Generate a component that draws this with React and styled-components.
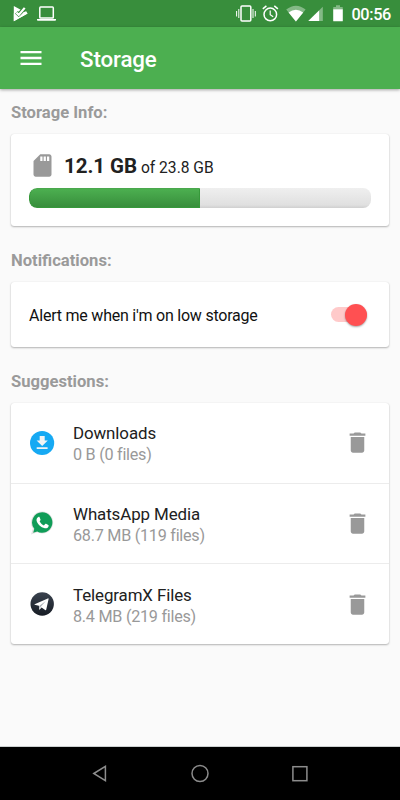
import React, { useState } from 'react'
import styled, { createGlobalStyle } from 'styled-components'

const GlobalStyle = createGlobalStyle`
*, *::before, *::after { box-sizing: border-box; }
body {
  margin: 0;
  background: #fafafa;
  font-family: Roboto, 'Noto Sans', sans-serif;
}
h1, h2, p { margin: 0; }
svg { display: block; flex-shrink: 0; }
`
const Screen = styled.div`
width: 400px;
height: 800px;
display: flex;
flex-direction: column;
background: #fafafa;
overflow: hidden;
`
const StatusBar = styled.div`
height: 27px;
flex-shrink: 0;
display: flex;
align-items: center;
justify-content: space-between;
padding: 0 9px 0 13px;
background: #388e3c;
color: #fff;
`
const StatusGroup = styled.div`
display: flex;
align-items: center;
gap: ${props => props.$gap}px;
`
const Clock = styled.span`
  font-size: 16.3px;
  font-weight: 500;
  letter-spacing: -0.35px;
  line-height: 27px;
  padding-top: 1px;
`
const Header = styled.header`
height: 62px;
flex-shrink: 0;
display: flex;
align-items: center;
gap: 35px;
padding: 0 17px 1px;
background: #4caf50;
color: #fff;
box-shadow: 0 1px 3px rgba(0, 0, 0, 0.35);
`
const IconButton = styled.button`
  display: flex;
  padding: 0;
  border: 0;
  background: none;
  color: inherit;
`
const Title = styled.h1`
  font-size: 22.3px;
  font-weight: 500;
  letter-spacing: -0.1px;
  line-height: 28px;
  padding-top: 3px;
`
const Content = styled.main`
flex: 1;
padding: 12px 11px 0;
border-bottom: 1px solid #ccd0d0;
`
const SectionLabel = styled.h2`
  height: 24px;
  margin-bottom: 9px;
  font-size: 16.6px;
  font-weight: 700;
  line-height: 24px;
  color: #9a9a9a;
`
const Card = styled.section`
height: ${props => props.$height}px;
margin-bottom: ${props => props.$space || 0}px;
background: #fff;
border-radius: 3px;
box-shadow: 0 1px 2px rgba(0, 0, 0, 0.28), 0 0 1px rgba(0, 0, 0, 0.12);
`
const StorageCard = styled(Card)`
padding: 18px 18px 0;
`
const Usage = styled.div`
display: flex;
align-items: center;
height: 27px;
color: #999;
`
const UsageText = styled.p`
  margin-left: 8px;
  padding-top: 2px;
  font-size: 15.6px;
  line-height: 28px;
  color: #212121;
  white-space: nowrap;
`
const Used = styled.strong`
  font-size: 20.5px;
  font-weight: 700;
  letter-spacing: -0.05px;
`
const Track = styled.div`
height: 20px;
margin-top: 9px;
border-radius: 8px;
overflow: hidden;
background: linear-gradient(#efefef, #e0e0e0 85%, #cfcfcf);
`
const Fill = styled.div`
height: 100%;
background: linear-gradient(#4caf50, #388e3c);
border: 1px solid #36993a;
border-top-color: #4aa84d;
border-radius: 8px 0 0 8px;
`
const AlertCard = styled(Card)`
display: flex;
align-items: center;
justify-content: space-between;
padding: 0 22px 0 18px;
`
const AlertText = styled.p`
  font-size: 16px;
  letter-spacing: -0.22px;
  line-height: 24px;
  padding-top: 2px;
  color: #111;
`
const Switch = styled.button`
display: flex;
align-items: center;
justify-content: ${props => props.$on ? 'flex-end' : 'flex-start'};
width: 36px;
height: 15px;
padding: 0;
border: 0;
border-radius: 8px;
background: ${props => props.$on ? '#ffcaca' : '#bbb'};
`
const Thumb = styled.span`
flex-shrink: 0;
width: 22px;
height: 22px;
border-radius: 50%;
background: ${props => props.$on ? '#ff5052' : '#fafafa'};
box-shadow: 0 1px 2px rgba(0, 0, 0, 0.35);
`
const Row = styled.div`
display: flex;
align-items: center;
height: 80.5px;
padding: 0 18px;
border-bottom: 1px solid #ececec;
&:last-child { border-bottom: 0; }
`
const RowText = styled.div`
flex: 1;
margin-left: 18px;
padding-top: 3px;
`
const RowTitle = styled.p`
  font-size: 16.9px;
  letter-spacing: -0.1px;
  line-height: 22px;
  color: #212121;
`
const RowDetail = styled.p`
  font-size: 16.2px;
  letter-spacing: -0.26px;
  line-height: 22px;
  color: #999;
`
const Delete = styled(IconButton)`
color: #999;
`
const NavBar = styled.nav`
height: 53px;
flex-shrink: 0;
display: flex;
align-items: center;
justify-content: center;
gap: 80px;
background: #000;
`
const BatterySvg = styled.svg`
margin: 0 2px 0 3px;
`
const SignalSvg = styled.svg`
margin-left: -4px;
`

const PlayCheck = () => (
  <svg width="15" height="17" viewBox="0 0 15 17">
    <path d="M.8 1 14.600 8.600.8 16.200Z" fill="#fff" />
    <path d="M3.400 7.300 5.700 9.600 12.200 2.400" fill="none" stroke="#388e3c" strokeWidth="4" />
    <path d="M3.400 7.600 5.700 9.900 11.700 2.900" fill="none" stroke="#fff" strokeWidth="2.200" />
    <path d="M.8 8.200 2.200 9.300 5.600 12.200 13 6 14.600 8.600.8 16.200Z" fill="#fff" />
  </svg>
)
const Laptop = () => (
  <svg width="19" height="17" viewBox="0 0 19 17">
    <rect x="2.800" y="2.100" width="13.500" height="11" rx=".8" fill="none" stroke="#fff" strokeWidth="1.500" />
    <path d="M0 14h19v.9q-.4.900-1.500.9h-16Q.3 15.800 0 14.900Z" fill="#fff" />
  </svg>
)
const Vibrate = () => (
  <svg width="20" height="17" viewBox="0 0 20 17">
    <rect x="5" y="1" width="9.800" height="15" rx="1" fill="none" stroke="#fff" strokeWidth="1.500" />
    <path d="M.6 6v5.500M2.800 4v9M17 4v9M19.300 6v5.500" stroke="#fff" strokeWidth="1" />
  </svg>
)
const Alarm = () => (
  <svg width="17" height="17" viewBox="0 0 17 17">
    <circle cx="8.300" cy="9.400" r="6.300" fill="none" stroke="#fff" strokeWidth="1.500" />
    <path d="M8.200 5.500v4.200l3 2" fill="none" stroke="#fff" strokeWidth="1.200" />
    <path d="M.8 3.900 4.400.9M12.300.9l3.600 3" stroke="#fff" strokeWidth="1.500" />
  </svg>
)
const Wifi = () => (
  <svg width="20" height="17" viewBox="0 0 20 17">
    <path d="M.2 4.600Q10-3 19.600 4.600L9.900 16.400Z" fill="#fff" opacity=".38" />
    <path d="M2.600 7.500Q9.900 2.200 17.200 7.500L9.900 16.400Z" fill="#fff" />
  </svg>
)
const Signal = () => (
  <SignalSvg width="15" height="17" viewBox="0 0 15 17">
    <path d="M14.800 1.800V16H.3Z" fill="#fff" opacity=".38" />
    <path d="M11.100 5.400V16H.3Z" fill="#fff" />
  </SignalSvg>
)
const Battery = () => (
  <BatterySvg width="10" height="17" viewBox="0 0 10 17">
    <path d="M3 .2h4v1.700h2.300q.5 0 .5.600v2H.2v-2q0-.6.5-.6H3Z" fill="#fff" opacity=".38" />
    <path d="M.2 4.200h9.600v11.600q0 .5-.5.500H.7q-.5 0-.5-.5Z" fill="#fff" />
  </BatterySvg>
)
const Menu = () => (
  <svg width="28" height="28" viewBox="0 0 24 24">
    <path d="M3 18h18v-2H3v2zm0-5h18v-2H3v2zm0-7v2h18V6H3z" fill="currentColor" />
  </svg>
)
const SdCard = () => (
  <svg width="27" height="27" viewBox="0 0 24 24">
    <path d="M18 2h-8L4.020 8 4 20c0 1.100.9 2 2 2h12c1.100 0 2-.9 2-2V4c0-1.100-.9-2-2-2zm-6 6h-2V4h2v4zm3 0h-2V4h2v4zm3 0h-2V4h2v4z" fill="currentColor" />
  </svg>
)
const Trash = () => (
  <svg width="27" height="27" viewBox="0 0 24 24">
    <path d="M6 19c0 1.100.9 2 2 2h8c1.100 0 2-.9 2-2V7H6v12zM19 4h-3.500l-1-1h-5l-1 1H5v2h14V4z" fill="currentColor" />
  </svg>
)
const DownloadLogo = () => (
  <svg width="26" height="26" viewBox="0 0 26 26">
    <circle cx="13.100" cy="13" r="12.100" fill="#16a9f3" />
    <path d="M10.700 6h5v4.500h3.100L13.200 16.100 7.600 10.500h3.100ZM7.700 17.300h10.900v1.800H7.700Z" fill="#f3f3f3" />
  </svg>
)
const WhatsAppLogo = () => (
  <svg width="26" height="26" viewBox="0 0 26 26">
    <path d="M13.200 1.500a11 11 0 1 1-5 20.800L2 24.400l1.900-5.800A11 11 0 0 1 13.200 1.500Z" fill="#e2e2e2" />
    <path d="M13.200 2.300a10.200 10.200 0 1 1-5 19.100l-4 1.300 1.100-3.900A10.200 10.200 0 0 1 13.200 2.300Z" fill="#109d58" />
    <path d="M9.400 6.900c.5-.2 1-.1 1.200.4l.9 2.200c.2.500-.1.900-.9 1.800.9 1.900 2.400 3.300 4.300 4.100l1.300-1.400c.3-.3.600-.3.900-.2l2.200 1.100c.5.300.4.900.2 1.500-.5 1.500-2.200 2.200-3.700 1.900-4-.8-7.900-4.600-8.300-8-.1-1.500.8-2.900 1.900-3.400Z" fill="#fff" />
  </svg>
)
const TelegramLogo = () => (
  <svg width="26" height="26" viewBox="0 0 26 26">
    <defs>
      <linearGradient id="tgx" x1="0" y1="0" x2="0" y2="1">
        <stop offset="0" stopColor="#3a424e" />
        <stop offset="1" stopColor="#171c25" />
      </linearGradient>
    </defs>
    <circle cx="13.200" cy="13" r="11.700" fill="url(#tgx)" />
    <path d="M5.600 13.200 18.800 7.400q.9-.3.800.7l-2.400 10.700q-.3.800-1.100.3l-3.500-2.600-1.900 2q-.5.400-.6-.3l-.2-3.400-4.200-1.100q-.6-.2-.1-.5Z" fill="#fff" />
    <path d="m10.100 15 6.700-4.900-5 5.700-1.300 2.400Z" fill="#aeb3ba" />
  </svg>
)

const suggestions = [
  { name: 'Downloads', detail: '0 B (0 files)', Logo: DownloadLogo },
  { name: 'WhatsApp Media', detail: '68.7 MB (119 files)', Logo: WhatsAppLogo },
  { name: 'TelegramX Files', detail: '8.4 MB (219 files)', Logo: TelegramLogo },
]

const App = () => {
  const [alertOn, setAlertOn] = useState(true)
  return (
    <>
      <GlobalStyle />
      <Screen>
        <StatusBar>
          <StatusGroup $gap={9}>
            <PlayCheck />
            <Laptop />
          </StatusGroup>
          <StatusGroup $gap={6.5}>
            <Vibrate />
            <Alarm />
            <Wifi />
            <Signal />
            <Battery />
            <Clock>00:56</Clock>
          </StatusGroup>
        </StatusBar>
        <Header>
          <IconButton aria-label="Menu"><Menu /></IconButton>
          <Title>Storage</Title>
        </Header>
        <Content>
          <SectionLabel>Storage Info:</SectionLabel>
          <StorageCard $height={92} $space={23}>
            <Usage>
              <SdCard />
              <UsageText><Used>12.1 GB</Used> of 23.8 GB</UsageText>
            </Usage>
            <Track>
              <Fill style={{ width: '50%' }} />
            </Track>
          </StorageCard>
          <SectionLabel>Notifications:</SectionLabel>
          <AlertCard $height={65} $space={23}>
            <AlertText>Alert me when i'm on low storage</AlertText>
            <Switch $on={alertOn} onClick={() => setAlertOn(!alertOn)} aria-label="Low storage alert">
              <Thumb $on={alertOn} />
            </Switch>
          </AlertCard>
          <SectionLabel>Suggestions:</SectionLabel>
          <Card $height={241}>
            {suggestions.map(({ name, detail, Logo }) => (
              <Row key={name}>
                <Logo />
                <RowText>
                  <RowTitle>{name}</RowTitle>
                  <RowDetail>{detail}</RowDetail>
                </RowText>
                <Delete aria-label={`Delete ${name}`}><Trash /></Delete>
              </Row>
            ))}
          </Card>
        </Content>
        <NavBar>
          <svg width="20" height="20" viewBox="0 0 20 20">
            <path d="M3.800 9.500 15.400 2.300v14.400Z" fill="none" stroke="#8c8c8c" strokeWidth="1.500" />
          </svg>
          <svg width="20" height="20" viewBox="0 0 20 20">
            <circle cx="10" cy="9.500" r="8" fill="none" stroke="#8c8c8c" strokeWidth="1.500" />
          </svg>
          <svg width="20" height="20" viewBox="0 0 20 20">
            <rect x="2.900" y="2.700" width="14" height="14" fill="none" stroke="#8c8c8c" strokeWidth="1.500" />
          </svg>
        </NavBar>
      </Screen>
    </>
  )
}
export default App
